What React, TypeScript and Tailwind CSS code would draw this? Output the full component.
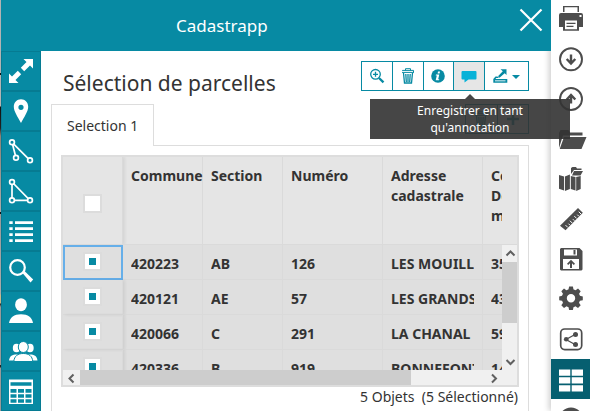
import React from "react";

type Children = { children: React.ReactNode };

function SideButton({ children }: Children) {
  return (
    <button className="block h-10 w-10 shrink-0 border border-[#067b92] bg-[#078aa3]">
      <svg viewBox="1 1 38 38" className="block h-[38px] w-[38px]" fill="white" stroke="none">
        {children}
      </svg>
    </button>
  );
}

function RailButton({ children, active = false }: Children & { active?: boolean }) {
  return (
    <button className={active ? "block h-10 w-full shrink-0 bg-[#065f70]" : "block h-10 w-full shrink-0"}>
      <svg viewBox="0 0 39 40" className="block h-10 w-[39px]" fill={active ? "white" : "#4d4d4d"}>
        {children}
      </svg>
    </button>
  );
}

function ToolButton({ children, active = false }: Children & { active?: boolean }) {
  return (
    <button
      className={
        active
          ? "flex h-full flex-1 items-center justify-center bg-[#e6e6e6]"
          : "flex h-full flex-1 items-center justify-center bg-white"
      }
    >
      {children}
    </button>
  );
}

function Trash() {
  return (
    <svg width="14" height="16" viewBox="0 0 14 16" fill="none" stroke="#078aa3">
      <path d="M4.5 2.500V.7h5v1.800M1.500 3v-.6h11V4M1 4.400h12" />
      <path d="M2.500 5l1 10h7l1-10M4.800 6l.5 8M7 6v8M9.200 6l-.5 8" strokeWidth="1.300" />
    </svg>
  );
}

const rows = [
  ["420223", "AB", "126", "LES MOUILLES", "3524"],
  ["420121", "AE", "57", "LES GRANDS", "4312"],
  ["420066", "C", "291", "LA CHANAL", "5930"],
  ["420336", "B", "919", "BONNEFONT", "1420"],
];

function Cell({ text }: { text: string }) {
  return (
    <div className="border-r border-b border-[#dadada] px-2 pt-[9px]">
      <div className="overflow-hidden whitespace-nowrap leading-[20px]">{text}</div>
    </div>
  );
}

function Checkbox({ checked = false }: { checked?: boolean }) {
  return (
    <span className="flex h-[19px] w-[19px] items-center justify-center border-2 border-[#dcdcdc] bg-white">
      {checked && <span className="h-[7px] w-[7px] bg-[#078aa3]" />}
    </span>
  );
}

const columns = "grid grid-cols-[60px_80px_80px_100px_100px_80px]";

function DataGrid() {
  return (
    <div className="h-[232px] w-[458px] border-2 border-[#dddddd] bg-[#e5e5e5] text-[14px] font-bold text-[#333333]">
      <div className="flex h-[88px] overflow-hidden">
        <div className={`${columns} h-full w-[439px] shrink-0 overflow-hidden leading-[20px]`}>
          <div className="flex justify-center border-r border-b border-[#dadada] pt-[37px] shadow-[2px_0_3px_#00000012]">
            <Checkbox />
          </div>
          <div className="border-r border-b border-[#dadada] pt-[9px] pl-2">Commune</div>
          <div className="border-r border-b border-[#dadada] px-2 pt-[9px]">Section</div>
          <div className="border-r border-b border-[#dadada] px-2 pt-[9px]">Numéro</div>
          <div className="border-r border-b border-[#dadada] px-2 pt-[9px]">Adresse cadastrale</div>
          <div className="border-b border-[#dadada] pt-[9px] pl-2">
            Co
            <br />
            De
            <br />
            m
          </div>
        </div>
        <div className="flex-1 border-b border-[#dadada]" />
      </div>
      <div className="flex h-[125px]">
        <div className="w-[439px] shrink-0 overflow-hidden bg-[#dfdfdf]">
          {rows.map((row, i) => (
            <div key={row[0]} className={`${columns} h-[35px]`}>
              <div
                className={
                  i === 0
                    ? "flex justify-center border-2 border-[#66afe9] pt-[5px] pr-px"
                    : "flex justify-center border-r border-b border-[#dadada] pt-[7px] shadow-[2px_0_3px_#00000012]"
                }
              >
                <Checkbox checked />
              </div>
              {row.map((text) => (
                <Cell key={text} text={text} />
              ))}
            </div>
          ))}
        </div>
        <div className="flex flex-1 flex-col justify-between bg-[#f0f0f0]">
          <svg className="h-[17px] w-[15px] bg-[#f0f0f0]" viewBox="0 0 15 17" fill="none" stroke="#606060" strokeWidth="2">
            <path d="M4.500 10.500l4-4 4 4" />
          </svg>
          <div className="mb-auto h-[61px] bg-[#cdcdcd]" />
          <svg className="h-[17px] w-[15px]" viewBox="0 0 15 17" fill="none" stroke="#606060" strokeWidth="2">
            <path d="M4.500 7l4 4 4-4" />
          </svg>
        </div>
      </div>
      <div className="flex h-[15px] bg-[#f0f0f0]">
        <svg className="h-[15px] w-[17px]" viewBox="0 0 17 15" fill="none" stroke="#606060" strokeWidth="2">
          <path d="M10.500 4.500l-4 4 4 4" />
        </svg>
        <div className="h-full w-[331px] bg-[#cdcdcd]" />
        <svg className="ml-[74px] h-[15px] w-[17px]" viewBox="0 0 17 15" fill="none" stroke="#606060" strokeWidth="2">
          <path d="M7 4.500l4 4-4 4" />
        </svg>
      </div>
    </div>
  );
}

function Sidebar() {
  return (
    <nav className="flex w-10 shrink-0 flex-col">
      <SideButton>
        <path d="M22.500 8H32v9.500l-3-3-5.800 5.700-3.400-3.400 5.700-5.800zM8 32v-9.500l3 3 5.800-5.700 3.400 3.400-5.700 5.800 3 3z" />
      </SideButton>
      <SideButton>
        <path fillRule="evenodd" d="M20 8.300c-4.200 0-7.200 3.300-7.200 7.400 0 4.800 4 10 7.200 16.300 3.200-6.300 7.200-11.500 7.200-16.300 0-4.100-3-7.400-7.200-7.400zm0 5.400a2.600 2.600 0 110 5.200 2.600 2.600 0 010-5.200z" />
      </SideButton>
      <SideButton>
        <g stroke="white" strokeWidth="1.700" fill="#078aa3">
          <path d="M11 11.300l4 15.400M11 11.300l18 18" />
          <circle cx="11" cy="11.300" r="2.400" />
          <circle cx="15" cy="26.700" r="2.400" />
          <circle cx="29" cy="29.300" r="2.400" />
        </g>
      </SideButton>
      <SideButton>
        <g stroke="white" strokeWidth="1.700" fill="#078aa3">
          <path d="M11 11v18.300h18z" />
          <circle cx="11" cy="11" r="2.400" />
          <circle cx="11" cy="29.300" r="2.400" />
          <circle cx="29" cy="29.300" r="2.400" />
        </g>
      </SideButton>
      <SideButton>
        <path d="M8.300 10.200h3.400v2.800H8.300zM14 10.200h18v2.800H14zM8.300 16.300h3.400v2.800H8.300zM14 16.300h18v2.800H14zM8.300 22.300h3.400v2.800H8.300zM14 22.300h18v2.800H14zM8.300 28.300h3.400v2.800H8.300zM14 28.300h18v2.800H14z" />
      </SideButton>
      <SideButton>
        <circle cx="16.500" cy="16.500" r="7.300" fill="none" stroke="white" strokeWidth="2.200" />
        <path d="M21.500 22l2-2 8.700 8.400-2.700 3z" />
      </SideButton>
      <SideButton>
        <ellipse cx="20" cy="13.700" rx="5.900" ry="6.500" />
        <path d="M8 32c1-5.500 5-8.800 12-8.800S31 26.500 32 32z" />
      </SideButton>
      <SideButton>
        <ellipse cx="15.500" cy="17" rx="3.700" ry="4.300" />
        <ellipse cx="29" cy="17" rx="3.700" ry="4.300" />
        <path d="M8 29.500c.5-4.500 3.500-6 7.500-6h13.500c4 0 7 1.500 7.500 6z" />
        <g stroke="#078aa3">
          <ellipse cx="22.300" cy="16" rx="5" ry="5.500" />
          <path d="M12.800 30.500c.5-5.500 4-8 9.500-8s9 2.500 9.500 8z" />
        </g>
      </SideButton>
      <SideButton>
        <path d="M8 8.500h24V33H8z" />
        <path d="M9.500 11.200h21v3.500h-21zM9.500 18h6v3.700h-6zM17 18h6v3.700h-6zM24.500 18h6v3.700h-6zM9.500 23.200h6v3.500h-6zM17 23.200h6v3.500h-6zM24.500 23.200h6v3.500h-6zM9.500 28.200h6v3.500h-6zM17 28.200h6v3.500h-6zM24.500 28.200h6v3.500h-6z" fill="#078aa3" />
      </SideButton>
    </nav>
  );
}

function Rail() {
  return (
    <aside className="-mt-px flex w-[39px] shrink-0 flex-col bg-white shadow-[-2px_0_6px_#00000033]">
      <RailButton>
        <path d="M12 7h16v6H12zM10 14h20q2 0 2 2v12h-4v3.700H12V28H8V16q0-2 2-2z" />
        <path d="M13.500 8.300h13V13h-13zM14 21.500h12v8.700H14zM28.500 16h2v2h-2z" fill="white" />
        <path d="M15.500 23.700h9V25h-9zM15.500 26.700h7V28h-7z" />
      </RailButton>
      <RailButton>
        <g fill="none" stroke="#4d4d4d" strokeWidth="1.900">
          <circle cx="20" cy="20.300" r="11" />
          <path d="M20 15.500v8.500M15.700 20l4.300 4.500 4.300-4.500" strokeWidth="2.400" />
        </g>
      </RailButton>
      <RailButton>
        <g fill="none" stroke="#4d4d4d" strokeWidth="1.900">
          <circle cx="20" cy="20" r="11" />
          <path d="M20 24.500V16M15.700 20.500l4.300-4.500 4.300 4.500" strokeWidth="2.400" />
        </g>
      </RailButton>
      <RailButton>
        <path d="M8 29V14l1.500-3h8l1.500 2.500h12.500v3H12zM13 18h22.500l-5 12H8.700z" />
      </RailButton>
      <RailButton>
        <path d="M8 16l5 1.500v14L8 29.800zM13.900 17.500l5-2v14.500l-5 2zM19.800 17l4.700 1v13.500l-4.700-1.500zM25.200 18l4.500-1v13l-4.500 2zM20 15V9l1.500-1h3.500l1 1.500h4.500V11h-7.500zM23 12h9l-2.500 4.500h-8.500z" />
      </RailButton>
      <RailButton>
        <path d="M27 9l4.800 4.700-17.300 17.600L9 26.800z" />
        <path d="M30 15l-2.300-2.300M27.800 17.200l-1.500-1.500M25.600 19.400l-2.300-2.300M23.400 21.700l-1.500-1.500M21.200 24l-2.300-2.300M19 26.200l-1.500-1.500M16.800 28.400l-2.300-2.300" stroke="white" strokeWidth="1" />
      </RailButton>
      <RailButton>
        <path fillRule="evenodd" d="M10 9h18.500l3 3v18.500l-1 1H10l-1-1V10zM13 10.500v6h13v-6zM12 20v10h16V20z" />
        <path d="M22.500 11h2v4.500h-2zM20 20.800l4 4-1.200 1.200-1.800-1.700V29h-2v-4.700L17.200 26 16 24.800z" />
      </RailButton>
      <RailButton>
        <circle cx="20" cy="19.300" r="6.700" fill="none" stroke="#4d4d4d" strokeWidth="5" />
        {[0, 45, 90, 135, 180, 225, 270, 315].map((angle) => (
          <path key={angle} d="M17.300 11.500l.8-4h3.800l.8 4z" transform={`rotate(${angle} 20 19.300)`} />
        ))}
      </RailButton>
      <RailButton>
        <rect x="9.700" y="10" width="21" height="20.600" rx="4" fill="none" stroke="#4d4d4d" strokeWidth="1.700" />
        <path d="M24 15.500l-9 5 9 5" fill="none" stroke="#4d4d4d" strokeWidth="1.300" />
        <circle cx="15.200" cy="20.300" r="2.300" />
        <circle cx="24.500" cy="15.500" r="2.500" />
        <circle cx="24.500" cy="25.500" r="2.500" />
      </RailButton>
      <RailButton active>
        <path d="M8 10.500h11.300v6.300H8zM20.700 10.500H32v6.300H20.700zM8 18.300h11.300v6.300H8zM20.700 18.300H32v6.300H20.700zM8 26.300h11.300v6.300H8zM20.700 26.300H32v6.300H20.700z" />
      </RailButton>
      <RailButton>
        <circle cx="20" cy="20.500" r="12" />
      </RailButton>
    </aside>
  );
}

export default function App() {
  return (
    <div className="relative flex h-[411px] w-[590px] overflow-hidden bg-white font-['Noto_Sans',sans-serif] text-[#333333]">
      <div className="w-px shrink-0 bg-[linear-gradient(#b3b3b3_73px,#111_73px,#111_75px,#b3b3b3_75px,#b3b3b3_106px,#111_107px,#222_128px,#8c8378_136px,#aaa_212px,#111_212px,#111_214px,#999_214px,#aaa_294px,#c8b98a_295px,#c8b98a_303px,#222_304px,#999_307px,#999_365px,#222_365px,#222_367px,#999_368px)]" />
      <div className="flex w-[550px] shrink-0 flex-col">
        <header className="z-10 flex h-[51px] shrink-0 items-center justify-between bg-[#078aa3] text-white">
          <h1 className="ml-[175px] text-[17px] leading-6">Cadastrapp</h1>
          <svg className="mr-[8px] mb-[12px] h-6 w-6" viewBox="0 0 24 24" fill="none" stroke="white" strokeWidth="2.200">
            <path d="M1.500 1.500l21 21M22.500 1.500l-21 21" />
          </svg>
        </header>
        <div className="flex h-[360px]">
          <Sidebar />
          <main className="flex flex-1 flex-col px-[10px]">
            <div className="mt-[10px] flex h-[43px] justify-between pr-[12px] pl-[12px]">
              <h2 className="pt-[8px] text-[21px] leading-7 whitespace-nowrap">Sélection de parcelles</h2>
              <div className="flex h-[30px] w-[168px] divide-x divide-[#078aa3] border border-[#078aa3]">
                <ToolButton>
                  <svg width="16" height="16" viewBox="0 0 16 16" fill="none" stroke="#078aa3" strokeWidth="1.300">
                    <circle cx="6.500" cy="6.300" r="4.800" />
                    <path d="M4 6.300h5M6.500 3.800v5" />
                    <path d="M10 10l4.500 4.300" strokeWidth="2.300" />
                  </svg>
                </ToolButton>
                <ToolButton>
                  <Trash />
                </ToolButton>
                <ToolButton>
                  <svg width="14" height="14" viewBox="0 0 14 14">
                    <circle cx="7" cy="7" r="6.800" fill="#078aa3" />
                    <path d="M7 2.500h2l-.4 2h-2zM5 5.500h3.300l-1.100 4.700h1.100l-.3 1H4.700l1.100-4.700H4.700z" fill="white" />
                  </svg>
                </ToolButton>
                <ToolButton active>
                  <svg width="16" height="14" viewBox="0 0 16 14" className="translate-y-px">
                    <path d="M1.500 1h13q1 0 1 1v6.500q0 1-1 1H7.500L3.500 12.500v-3h-2q-1 0-1-1V2q0-1 1-1z" fill="#08b2d8" />
                  </svg>
                </ToolButton>
                <button className="flex h-full w-[43px] items-center justify-center gap-[4px]">
                  <svg width="15" height="14" viewBox="0 0 15 14" fill="#078aa3">
                    <path d="M7.500.3H13.500V6l-1.800-1.800-5.200 4.500-1.500-1.500 4.800-4.900zM2.500 7.500h2l1.500 1.600H3.300L2.500 10h11.800v3.700H.3v-3.600z" />
                    <path d="M2 11.400h10.500v.9H2z" fill="white" />
                  </svg>
                  <svg width="8" height="4" viewBox="0 0 8 4" className="translate-y-px">
                    <path d="M0 0h8L4 4z" fill="#078aa3" />
                  </svg>
                </button>
              </div>
            </div>
            <div className="flex h-[42px] shrink-0 justify-between">
              <div className="z-10 h-[42px] w-[103px] border border-b-0 border-[#dddddd] bg-white pt-[11px] pl-[15px] text-[14px] leading-5">
                Selection 1
              </div>
              <div className="mr-[12px] flex h-[30px] w-[64px] divide-x divide-[#078aa3] border border-[#078aa3]">
                <ToolButton>
                  <Trash />
                </ToolButton>
                <ToolButton>
                  <svg width="14" height="14" viewBox="0 0 14 14" fill="#078aa3">
                    <path d="M5.700 1h2.600v4.700H13v2.600H8.300V13H5.700V8.300H1V5.700h4.700z" />
                  </svg>
                </ToolButton>
              </div>
            </div>
            <div className="-mt-px h-[268px] w-[478px] border border-b-0 border-[#dddddd] pt-[9px] pl-[9px]">
              <DataGrid />
              <div className="w-[457px] text-right text-[14px] leading-5 whitespace-pre">5 Objets  (5 Sélectionné)</div>
            </div>
          </main>
        </div>
      </div>
      <Rail />
      <div className="absolute top-[94px] left-[370px] z-20 flex w-[200px] flex-col items-center opacity-90">
        <svg width="10" height="5" viewBox="0 0 10 5">
          <path d="M5 0l5 5H0z" fill="#333333" />
        </svg>
        <div className="h-10 w-full bg-[#333333] px-8 pt-[3px] text-center text-[12px] leading-[17px] text-white">
          Enregistrer en tant qu&apos;annotation
        </div>
      </div>
    </div>
  );
}
